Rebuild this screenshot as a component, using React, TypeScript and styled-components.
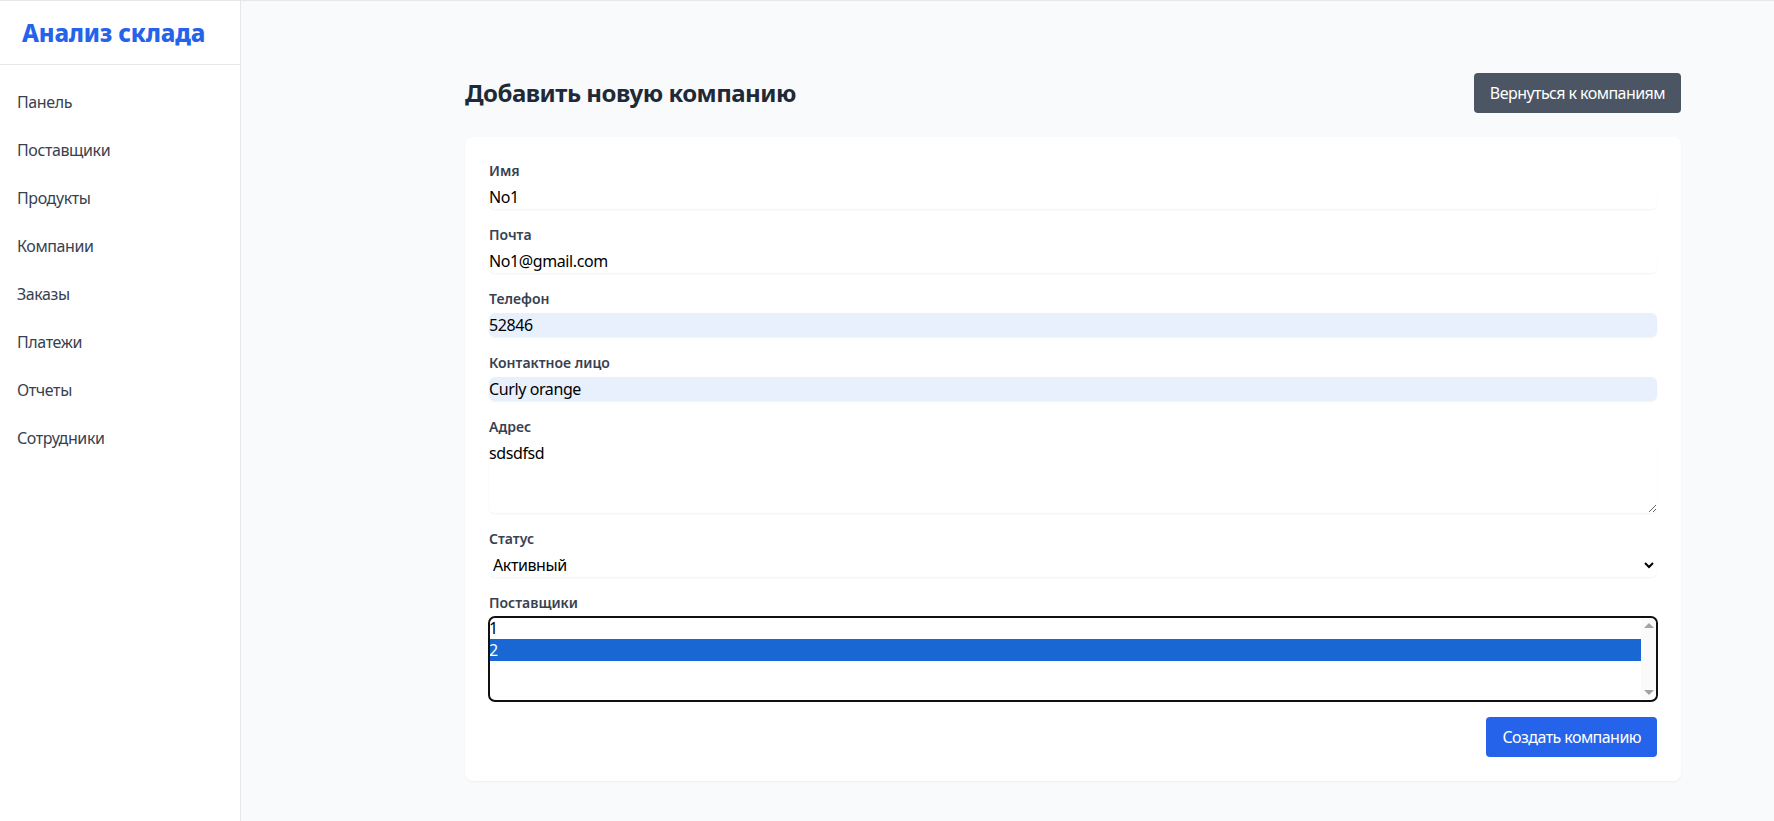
import React from "react";
import styled, { createGlobalStyle } from "styled-components";

const GlobalStyle = createGlobalStyle`
  * { box-sizing: border-box; }
  html, body { margin: 0; padding: 0; }
  body {
    font-family: "Noto Sans", "Open Sans", "Liberation Sans", sans-serif;
    background: #f9fafb;
    color: #111827;
  }
`;

const Layout = styled.div`
  display: flex;
  min-height: 100vh;
  border-top: 1px solid #e5e7eb;
  background: #f9fafb;
`;

const Sidebar = styled.aside`
  width: 241px;
  flex-shrink: 0;
  background: #ffffff;
  border-right: 1px solid #e5e7eb;
  display: flex;
  flex-direction: column;
`;

const Brand = styled.div`
  height: 64px;
  display: flex;
  align-items: center;
  padding: 0 22px;
  border-bottom: 1px solid #e5e7eb;
  font-size: 24px;
  font-weight: 800;
  color: #2563eb;
  letter-spacing: -0.2px;
`;

const Nav = styled.nav`
  display: flex;
  flex-direction: column;
  padding: 13px 0;
`;

const NavItem = styled.a`
  display: block;
  padding: 12px 17px;
  font-size: 16px;
  line-height: 24px;
  letter-spacing: -0.4px;
  color: #374151;
  text-decoration: none;
  cursor: pointer;
`;

const Main = styled.main`
  flex: 1;
  padding: 72px 93px 24px 224px;
`;

const HeaderRow = styled.div`
  display: flex;
  align-items: center;
  justify-content: space-between;
  margin-bottom: 24px;
`;

const Title = styled.h1`
  margin: 0;
  font-size: 24px;
  line-height: 32px;
  font-weight: 700;
  letter-spacing: -0.5px;
  color: #1f2937;
`;

const Button = styled.button<{ $variant: "gray" | "blue" }>`
  border: none;
  border-radius: 4px;
  padding: 8px 16px;
  font-family: inherit;
  font-size: 16px;
  line-height: 24px;
  letter-spacing: -0.55px;
  color: #ffffff;
  background: ${(p) => (p.$variant === "gray" ? "#4b5563" : "#2563eb")};
  cursor: pointer;
`;

const Card = styled.form`
  background: #ffffff;
  border-radius: 8px;
  box-shadow: 0 1px 2px rgba(0, 0, 0, 0.05);
  padding: 24px;
  display: flex;
  flex-direction: column;
  gap: 16px;
`;

const Field = styled.div`
  display: flex;
  flex-direction: column;
  gap: 4px;
`;

const Label = styled.label`
  font-size: 14px;
  line-height: 20px;
  font-weight: 600;
  color: #374151;
`;

const baseControl = `
  width: 100%;
  border: none;
  border-radius: 6px;
  box-shadow: 0 1px 2px 0 rgba(0, 0, 0, 0.05);
  font-family: "Noto Sans", "Open Sans", "Liberation Sans", sans-serif;
  font-size: 16px;
  line-height: 24px;
  letter-spacing: -0.4px;
  color: #000000;
  padding: 0;
  margin: 0;
  outline: none;
`;

const Input = styled.input<{ $autofilled?: boolean }>`
  ${baseControl}
  height: 24px;
  background: ${(p) => (p.$autofilled ? "#e8f0fe" : "#ffffff")};
`;

const TextArea = styled.textarea`
  ${baseControl}
  height: 72px;
  background: #ffffff;
  resize: vertical;
  display: block;
`;

const Select = styled.select`
  ${baseControl}
  height: 24px;
  background: #ffffff;
`;

const ListboxWrap = styled.div`
  position: relative;
`;

const MultiSelect = styled.select`
  ${baseControl}
  display: block;
  height: 84px;
  background: #ffffff;
  outline: 2px solid #101010;
  outline-offset: -1px;
  border-radius: 6px;
  line-height: 20px;

  option {
    padding: 0;
    line-height: 20px;
    color: #000000;
  }

  option:checked {
    background: #1967d2 linear-gradient(#1967d2, #1967d2);
    color: #ffffff;
  }
`;

/* decorative classic scrollbar lying over the right edge of the listbox */
const ScrollTrack = styled.div`
  position: absolute;
  top: 2px;
  bottom: 2px;
  right: 1px;
  width: 15px;
  background: #fafafa;
  border-radius: 0 5px 5px 0;
  pointer-events: none;
  display: flex;
  flex-direction: column;
  justify-content: space-between;
  align-items: center;
  padding: 4px 0;
`;

const Arrow = styled.span<{ $dir: "up" | "down" }>`
  width: 0;
  height: 0;
  border-left: 5px solid transparent;
  border-right: 5px solid transparent;
  ${(p) =>
    p.$dir === "up"
      ? "border-bottom: 5px solid #a3a3a3;"
      : "border-top: 5px solid #a3a3a3;"}
`;

const Actions = styled.div`
  display: flex;
  justify-content: flex-end;
`;

const navItems = [
  "Панель",
  "Поставщики",
  "Продукты",
  "Компании",
  "Заказы",
  "Платежи",
  "Отчеты",
  "Сотрудники",
];

export default function App() {
  return (
    <>
      <GlobalStyle />
      <Layout>
        <Sidebar>
          <Brand>Анализ склада</Brand>
          <Nav>
            {navItems.map((n) => (
              <NavItem key={n}>{n}</NavItem>
            ))}
          </Nav>
        </Sidebar>
        <Main>
          <HeaderRow>
            <Title>Добавить новую компанию</Title>
            <Button type="button" $variant="gray">
              Вернуться к компаниям
            </Button>
          </HeaderRow>
          <Card onSubmit={(e) => e.preventDefault()}>
            <Field>
              <Label>Имя</Label>
              <Input defaultValue="No1" />
            </Field>
            <Field>
              <Label>Почта</Label>
              <Input defaultValue="No1@gmail.com" />
            </Field>
            <Field>
              <Label>Телефон</Label>
              <Input defaultValue="52846" $autofilled />
            </Field>
            <Field>
              <Label>Контактное лицо</Label>
              <Input defaultValue="Curly orange" $autofilled />
            </Field>
            <Field>
              <Label>Адрес</Label>
              <TextArea defaultValue="sdsdfsd" />
            </Field>
            <Field>
              <Label>Статус</Label>
              <Select defaultValue="active">
                <option value="active">Активный</option>
                <option value="inactive">Неактивный</option>
              </Select>
            </Field>
            <Field>
              <Label>Поставщики</Label>
              <ListboxWrap>
                <MultiSelect multiple size={4} defaultValue={["2"]}>
                  <option value="1">1</option>
                  <option value="2">2</option>
                </MultiSelect>
                <ScrollTrack aria-hidden="true">
                  <Arrow $dir="up" />
                  <Arrow $dir="down" />
                </ScrollTrack>
              </ListboxWrap>
            </Field>
            <Actions>
              <Button type="submit" $variant="blue">
                Создать компанию
              </Button>
            </Actions>
          </Card>
        </Main>
      </Layout>
    </>
  );
}
